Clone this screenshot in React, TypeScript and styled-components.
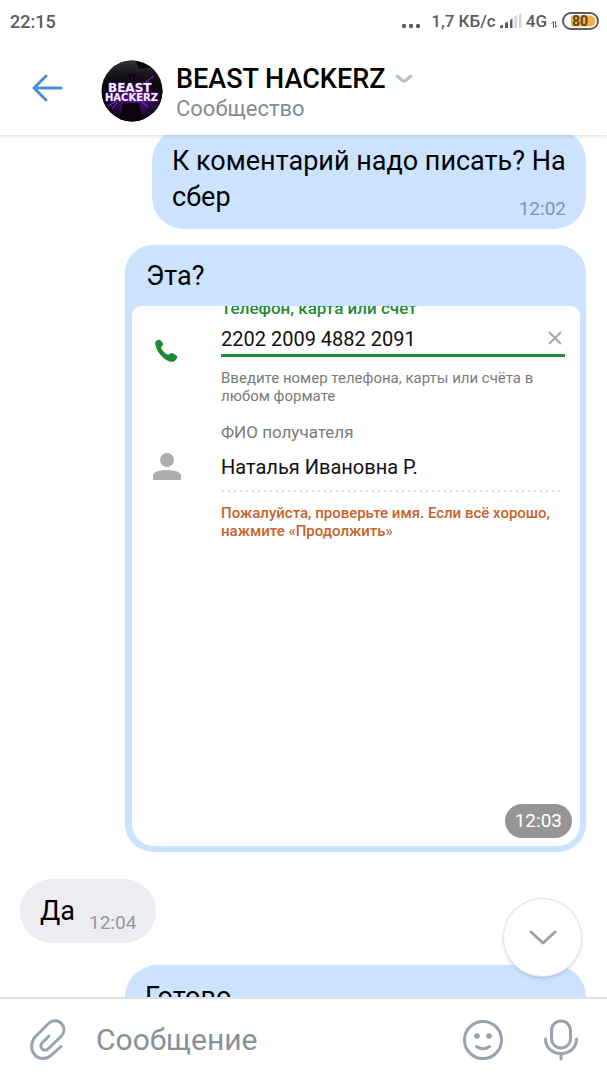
import React from "react";
import styled, { createGlobalStyle } from "styled-components";

const GlobalStyle = createGlobalStyle`
  * { box-sizing: border-box; }
  body {
    margin: 0;
    background: #fff;
    color: #0a0a0a;
    font-family: Roboto, "Liberation Sans", sans-serif;
  }
  button {
    display: flex;
    padding: 0;
    border: 0;
    background: none;
    font: inherit;
    cursor: pointer;
  }
  svg { display: block; flex: none; }
`;

const Page = styled.div`
  display: flex;
  flex-direction: column;
  height: 100vh;
`;

const StatusBar = styled.div`
  display: flex;
  align-items: center;
  justify-content: space-between;
  flex: none;
  height: 42px;
  padding: 0 8px 0 10px;
  background: #fff;
  color: #5c5c5c;
  font-size: 17px;
  font-weight: 500;
  z-index: 2;
`;

const Clock = styled.span`
  font-size: 18px;
`;

const StatusGroup = styled.div`
  display: flex;
  align-items: center;
  gap: 4px;
`;

const NetSpeed = styled.span`
  margin-left: 6px;
`;

const Header = styled.header`
  display: flex;
  align-items: center;
  flex: none;
  height: 93px;
  padding: 4px 32px 0;
  background: #fff;
  box-shadow: 0 1px 4px rgba(0, 0, 0, 0.16);
  z-index: 1;
`;

const BackButton = styled.button`
  margin-bottom: 6px;
`;

const Avatar = styled.div`
  margin: 0 13px 0 38px;
`;

const Heading = styled.div`
  padding-top: 4px;
`;

const Title = styled.h1`
  display: flex;
  align-items: center;
  gap: 10px;
  margin: 0;
  font-size: 27px;
  line-height: 32px;
  font-weight: 500;
  color: #000;
`;

const Subtitle = styled.p`
  margin: 0;
  font-size: 22px;
  line-height: 28px;
  color: #848b95;
`;

const Feed = styled.main`
  position: relative;
  flex: 1;
  min-height: 0;
  overflow: hidden;
`;

const Messages = styled.div`
  display: flex;
  flex-direction: column;
  padding: 0 21px 0 20px;
  margin-top: -6px;
`;

const Bubble = styled.article<{ $own?: boolean; $wide?: boolean; $gap?: number }>`
  align-self: ${(p) => (p.$own ? "flex-end" : "flex-start")};
  width: ${(p) => (p.$wide ? "calc(100% - 105px)" : "auto")};
  max-width: ${(p) => (p.$wide ? "none" : "calc(100% - 132px)")};
  margin-top: ${(p) => p.$gap ?? 0}px;
  padding: 14px 20px;
  border-radius: 32px;
  background: ${(p) => (p.$own ? "#cce3ff" : "#ebedf0")};
`;

const MediaBubble = styled.article`
  align-self: flex-end;
  width: calc(100% - 105px);
  margin-top: 16px;
  padding: 0 6px 6px 7px;
  border-radius: 28px;
  background: #cce3ff;
`;

const Text = styled.p`
  margin: 0;
  font-size: 27px;
  line-height: 36px;
  color: #000;
`;

const Caption = styled(Text)`
  padding: 13px 14px 12px;
`;

const Time = styled.time<{ $own?: boolean }>`
  float: right;
  margin: 20px 0 -4px 14px;
  font-size: 19px;
  line-height: 20px;
  color: ${(p) => (p.$own ? "#8093ab" : "#95989e")};
`;

const Photo = styled.div`
  position: relative;
  height: 540px;
  overflow: hidden;
  border-radius: 9px 9px 22px 22px;
  background: #fff;
`;

const FormRow = styled.div<{ $iconTop: number }>`
  display: grid;
  grid-template-columns: 69px 1fr;
  padding: 0 15px 0 20px;

  > svg { margin-top: ${(p) => p.$iconTop}px; }
`;

const Label = styled.div<{ $active?: boolean }>`
  height: ${(p) => (p.$active ? 16 : 24)}px;
  margin-top: ${(p) => (p.$active ? -6 : 15)}px;
  font-size: 17px;
  font-weight: ${(p) => (p.$active ? 500 : 400)};
  line-height: ${(p) => (p.$active ? 16 : 24)}px;
  color: ${(p) => (p.$active ? "#1f8a35" : "#7b7b7b")};
`;

const Value = styled.div<{ $active?: boolean }>`
  display: flex;
  align-items: center;
  justify-content: space-between;
  height: ${(p) => (p.$active ? 41 : 46)}px;
  padding-top: ${(p) => (p.$active ? 8 : 0)}px;
  padding-right: 3px;
  border-bottom: ${(p) => (p.$active ? "3px solid #23863a" : "0")};
  font-size: 20px;
  color: #111;
`;

const ClearIcon = styled.svg`
  margin-bottom: 3px;
`;

const Hint = styled.p<{ $warn?: boolean }>`
  margin: 12px 0 0;
  font-size: 15px;
  font-weight: ${(p) => (p.$warn ? 500 : 400)};
  line-height: 18px;
  color: ${(p) => (p.$warn ? "#c8632a" : "#7b7b7b")};
`;

const PhotoTime = styled.time`
  position: absolute;
  right: 8px;
  bottom: 8px;
  padding: 0 10px;
  border-radius: 17px;
  background: #959595;
  color: #fff;
  font-size: 19px;
  line-height: 34px;
`;

const ScrollDown = styled.button`
  position: absolute;
  right: 26px;
  bottom: 21px;
  align-items: center;
  justify-content: center;
  width: 77px;
  height: 77px;
  border-radius: 50%;
  background: #fff;
  box-shadow: 0 0 0 1px #e2e4e7, 0 2px 4px rgba(0, 0, 0, 0.18);
`;

const Composer = styled.form`
  display: flex;
  align-items: center;
  flex: none;
  height: 83px;
  padding: 0 28px;
  border-top: 2px solid #dfe0e3;
  background: #fff;
`;

const MessageInput = styled.input`
  flex: 1;
  min-width: 0;
  margin: 0 28px;
  padding: 0;
  border: 0;
  outline: 0;
  background: none;
  font: 30px Roboto, "Liberation Sans", sans-serif;
  color: #000;

  &::placeholder { color: #87909b; opacity: 1; }
`;

const ComposerActions = styled.div`
  display: flex;
  gap: 39px;
`;

const Signal = () => (
  <svg width="22" height="16" viewBox="0 0 22 16" aria-hidden="true">
    <path d="M0 15v-2l3-1.500V15z M5 10l3-1.500V15H5z M10 7l2.500-1.500V15H10z" fill="#5c5c5c" />
    <path d="M14.500 3.500L17 2v13h-2.500z M19 1.500L21.500 0v15H19z" fill="#d5d5d5" />
  </svg>
);

const DataArrows = () => (
  <svg width="7" height="15" viewBox="0 0 7 15" fill="none" stroke="#666" aria-hidden="true">
    <path d="M2.500 14V7.500L.5 9.500M4.500 7v6.500L6.500 11.500" />
  </svg>
);

const Battery = () => (
  <svg width="37" height="18" viewBox="0 0 37 18" role="img" aria-label="80%">
    <rect x="1" y="1" width="35" height="16" rx="8" fill="#fff" stroke="#5c5c5c" strokeWidth="2" />
    <path d="M9 3.500h19a5.500 5.500 0 0 1 0 11H9z" fill="#f5b04a" />
    <text x="18" y="14" textAnchor="middle" fontFamily="Roboto, sans-serif" fontSize="14" fontWeight="700" fill="#5a431e">80</text>
  </svg>
);

const AvatarArt = () => (
  <svg width="62" height="62" viewBox="0 0 62 62" role="img" aria-label="BEAST HACKERZ">
    <defs>
      <clipPath id="disc"><circle cx="31" cy="31" r="30.500" /></clipPath>
      <radialGradient id="glow" cx="50%" cy="60%" r="50%">
        <stop offset="0" stopColor="#5b1494" />
        <stop offset=".55" stopColor="#2b0b48" />
        <stop offset="1" stopColor="#0a080c" />
      </radialGradient>
      <linearGradient id="smoke" x1="0" y1="0" x2="0" y2="1">
        <stop offset="0" stopColor="#3b393e" />
        <stop offset="1" stopColor="#17131b" stopOpacity="0" />
      </linearGradient>
    </defs>
    <g clipPath="url(#disc)">
      <rect width="62" height="62" fill="#0a080c" />
      <ellipse cx="33" cy="37" rx="32" ry="20" fill="url(#glow)" />
      <path d="M4 24V8L20 0h14l4 9 14-2 8 12v8H40l-8-9-9 8z" fill="url(#smoke)" />
      <path d="M24 25l1-8 4-3h5l3 4v7z M22 43h16l4 19H18z" fill="#08060a" />
      <path d="M27 17v5M31 16v6M35 17v4" stroke="#44216a" />
      <path d="M44 22l9-6M7 46l9-5M40 41l7 6M48 21l-6 4M11 49l5-6" stroke="#8a35c8" strokeWidth="1" />
      <g fill="#f4eefb" stroke="#5c2396" strokeWidth="1" paintOrder="stroke" fontFamily="'DejaVu Sans', sans-serif" fontWeight="700">
        <text x="7" y="32" fontSize="12">BEAST</text>
        <text x="4" y="41" fontSize="10">HACKERZ</text>
      </g>
    </g>
  </svg>
);

const PhoneIcon = () => (
  <svg width="32" height="32" viewBox="0 0 32 32" aria-hidden="true">
    <path
      d="M3.200 7.200C3 5.500 5.500 3.800 7.300 3.800c1.300 0 3.300 2.600 3.700 4.200.3 1.300-1.800 2.600-1.900 3.700-.1 1.600 5 6.600 6.900 6.900 1.300.2 2.500-1.900 3.800-1.700 1.600.3 4.900 2.200 5.400 3.600.5 1.500-2.200 5-4.200 5.200C14.500 26.500 4 17 3.200 7.200z"
      fill="#1f8a35"
    />
  </svg>
);

const PersonIcon = () => (
  <svg width="30" height="30" viewBox="0 0 30 30" aria-hidden="true">
    <circle cx="15" cy="8" r="7" fill="#adadad" />
    <path d="M1 28v-4c0-4 6-6 14-6s14 2 14 6v4z" fill="#adadad" />
  </svg>
);

export default function App() {
  return (
    <Page>
      <GlobalStyle />
      <StatusBar>
        <Clock>22:15</Clock>
        <StatusGroup>
          <svg width="20" height="18" viewBox="0 0 20 18" fill="#5c5c5c" aria-hidden="true">
            <circle cx="3" cy="14" r="2.200" /><circle cx="10" cy="14" r="2.200" /><circle cx="17" cy="14" r="2.200" />
          </svg>
          <NetSpeed>1,7 КБ/с</NetSpeed>
          <Signal />
          <span>4G</span>
          <DataArrows />
          <Battery />
        </StatusGroup>
      </StatusBar>

      <Header>
        <BackButton type="button" aria-label="Назад">
          <svg width="31" height="28" viewBox="0 0 31 28" fill="none" stroke="#4a8ddb" strokeWidth="3" strokeLinecap="round" strokeLinejoin="round">
            <path d="M14 2L2 14l12 12M2 14h27" />
          </svg>
        </BackButton>
        <Avatar><AvatarArt /></Avatar>
        <Heading>
          <Title>
            BEAST HACKERZ
            <svg width="18" height="10" viewBox="0 0 18 10" fill="none" stroke="#b9c0c9" strokeWidth="3" strokeLinecap="round" strokeLinejoin="round" aria-hidden="true">
              <path d="M2 2l5.500 4.500q1.500 1 3 0L16 2" />
            </svg>
          </Title>
          <Subtitle>Сообщество</Subtitle>
        </Heading>
      </Header>

      <Feed>
        <Messages>
          <Bubble $own>
            <Text>
              К коментарий надо писать? На сбер
              <Time $own>12:02</Time>
            </Text>
          </Bubble>

          <MediaBubble>
            <Caption>Эта?</Caption>
            <Photo>
              <FormRow $iconTop={30}>
                <PhoneIcon />
                <div>
                  <Label $active>Телефон, карта или счёт</Label>
                  <Value $active>
                    2202 2009 4882 2091
                    <ClearIcon width="14" height="14" viewBox="0 0 14 14" stroke="#a8a8a8" strokeWidth="2" aria-hidden="true">
                      <path d="M1 1l12 12M13 1L1 13" />
                    </ClearIcon>
                  </Value>
                  <Hint>Введите номер телефона, карты или счёта в любом формате</Hint>
                </div>
              </FormRow>
              <FormRow $iconTop={47}>
                <PersonIcon />
                <div>
                  <Label>ФИО получателя</Label>
                  <Value>Наталья Ивановна Р.</Value>
                  <svg width="100%" height="2" aria-hidden="true">
                    <line x1="1" y1="1" x2="99%" y2="1" stroke="#dcdcdc" strokeWidth="2" strokeDasharray="2 4" />
                  </svg>
                  <Hint $warn>Пожалуйста, проверьте имя. Если всё хорошо, нажмите «Продолжить»</Hint>
                </div>
              </FormRow>
              <PhotoTime>12:03</PhotoTime>
            </Photo>
          </MediaBubble>

          <Bubble $gap={27}>
            <Text>
              Да
              <Time>12:04</Time>
            </Text>
          </Bubble>

          <Bubble $own $wide $gap={22}>
            <Text>Готово</Text>
          </Bubble>
        </Messages>

        <ScrollDown type="button" aria-label="Вниз">
          <svg width="28" height="16" viewBox="0 0 28 16" fill="none" stroke="#99a2ad" strokeWidth="3" strokeLinecap="round" strokeLinejoin="round">
            <path d="M2 2l12 11L26 2" />
          </svg>
        </ScrollDown>
      </Feed>

      <Composer onSubmit={(e) => e.preventDefault()}>
        <button type="button" aria-label="Прикрепить">
          <svg width="40" height="44" viewBox="0 0 40 44" fill="none" stroke="#99a2ad" strokeWidth="3" strokeLinecap="round" strokeLinejoin="round">
            <path d="M21 18l-6.500 6.500c-4.500 4.800 1.500 10.500 6 6L33 18.500c3.500-3.700 4-8.500 1-12.200C30.500 1.800 24.500 1.800 20.500 5.500L7.500 18.500C2.500 24 2.500 32 6.500 36.500c4.500 5.300 12 5.300 17 .5L33 28.500" />
          </svg>
        </button>
        <MessageInput type="text" aria-label="Сообщение" placeholder="Сообщение" />
        <ComposerActions>
          <button type="button" aria-label="Смайлы">
            <svg width="42" height="42" viewBox="0 0 42 42" fill="none" stroke="#99a2ad" strokeWidth="3" strokeLinecap="round">
              <circle cx="21" cy="21" r="18.500" />
              <path d="M14.500 27.500q6.500 4.500 13 0" />
              <circle cx="15" cy="17" r="2.800" fill="#99a2ad" stroke="none" />
              <circle cx="27" cy="17" r="2.800" fill="#99a2ad" stroke="none" />
            </svg>
          </button>
          <button type="button" aria-label="Голосовое сообщение">
            <svg width="36" height="42" viewBox="0 0 36 42" fill="none" stroke="#99a2ad" strokeWidth="3" strokeLinecap="round">
              <rect x="8.500" y="2" width="19" height="27" rx="9.500" />
              <path d="M2.500 20c0 8.500 6.500 14.500 15.500 14.500S33.500 28.500 33.500 20M18 35v5" />
            </svg>
          </button>
        </ComposerActions>
      </Composer>
    </Page>
  );
}
